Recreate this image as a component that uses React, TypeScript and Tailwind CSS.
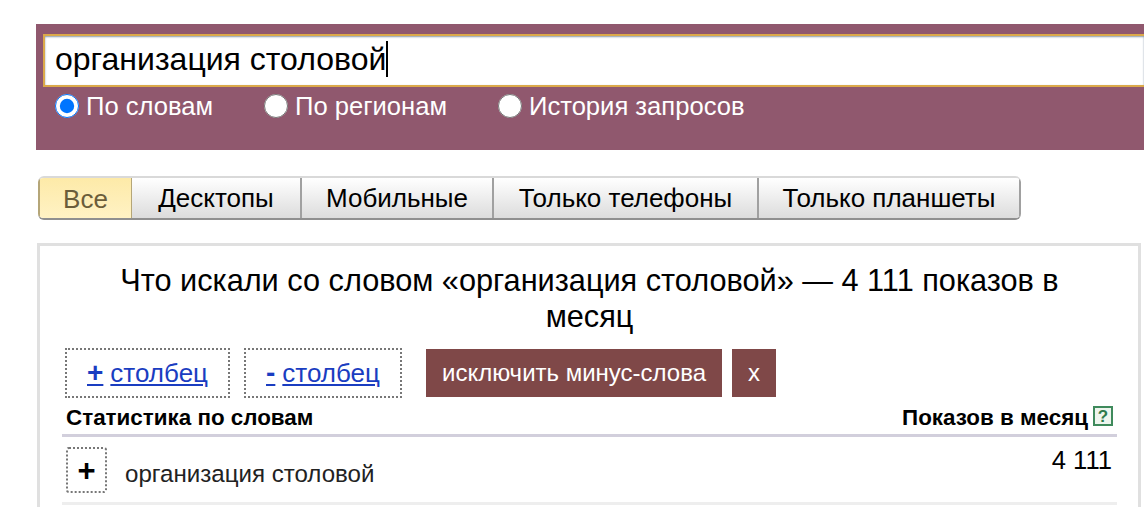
const tabs = ["Десктопы", "Мобильные", "Только телефоны", "Только планшеты"];
const tabWidths = ["w-[170px]", "w-[192px]", "w-[265px]", "w-[262px]"];
const modes = [
  { label: "По словам", checked: true, width: "w-[209px]" },
  { label: "По регионам", checked: false, width: "w-[234px]" },
  { label: "История запросов", checked: false, width: "w-auto" },
];

function ModeRadio({ label, checked, width }: { label: string; checked: boolean; width: string }) {
  return (
    <label className={`flex items-center gap-[7px] ${width}`}>
      <input type="radio" name="mode" defaultChecked={checked} className="m-0 h-6 w-6 shrink-0" />
      <span className="text-[25.6px] leading-[30px] text-white">{label}</span>
    </label>
  );
}

function ColumnButton({ sign, width }: { sign: string; width: string }) {
  return (
    <a href="#" className={`flex h-[50px] items-center justify-center border-2 border-dotted border-[#777] text-[26px] text-[#1a3dc1] underline ${width}`}>
      <b className="mr-[7px] text-[28px]">{sign}</b>столбец
    </a>
  );
}

export default function App() {
  return (
    <div className="h-[507px] w-[1144px] overflow-hidden bg-white pl-[36px] pt-[24px] font-['Liberation_Sans',Arial,sans-serif] text-black">
      <div className="h-[126px] bg-[#90586e] pl-[7px] pt-[10px]">
        <div className="flex h-[53px] items-center border-2 border-r-0 border-[#dba94a] bg-white pb-[3px] pl-[10px] shadow-[inset_0_1px_2px_#8899aa]">
          <span className="text-[32px] leading-[36px]">организация столовой</span>
          <span className="h-[36px] w-[2px] bg-black" />
        </div>
        <div className="mt-[4px] flex pl-[12px]">
          {modes.map(m => <ModeRadio key={m.label} {...m} />)}
        </div>
      </div>

      <div className="ml-[2px] mt-[26px] flex h-[44px] w-[983px] overflow-hidden rounded-[6px] border-b-2 border-t-2 border-b-[#8f8f8f] border-t-[#d9d9d9] text-[26px]">
        <div className="flex w-[94px] items-center justify-center border-l-2 border-r border-l-[#b5a678] border-r-[#b5a678] bg-gradient-to-b from-[#fdeaa8] to-[#fff2c4] pt-[2px] text-[#6b5d3a]">
          Все
        </div>
        {tabs.map((t, i) => (
          <div key={t} className={`flex items-center justify-center border-r-2 border-r-[#a0a0a0] bg-gradient-to-b from-white to-[#dcdcdc] ${tabWidths[i]}`}>
            {t}
          </div>
        ))}
      </div>

      <div className="mt-[23px] ml-[1px] h-[300px] w-[1104px] border-[3px] border-[#e0e0e0] pl-[22px] pr-[21px] pt-[17px]">
        <h1 className="mx-auto w-[960px] text-center text-[30.7px] font-normal leading-[36px]">
          Что искали со словом «организация столовой» — 4 111 показов в месяц
        </h1>
        <div className="ml-[3px] mt-[13px] flex items-center">
          <ColumnButton sign="+" width="w-[165px]" />
          <div className="w-[14px]" />
          <ColumnButton sign="-" width="w-[158px]" />
          <button className="ml-[24px] h-[48px] w-[296px] bg-[#7f4848] text-[24px] text-white">исключить минус-слова</button>
          <button className="ml-[10px] h-[48px] w-[44px] bg-[#7f4848] text-[24px] text-white">x</button>
        </div>
        <div className="flex h-[39px] items-center justify-between border-b-[3px] border-[#d2cfdc] pl-[4px] pt-[3px] text-[22.4px] font-bold">
          <span>Статистика по словам</span>
          <span className="flex items-center gap-[5px] pr-[4px]">
            Показов в месяц
            <svg width="20" height="20" viewBox="0 0 20 20" className="-mt-[3px]">
              <rect x="1" y="1" width="18" height="18" fill="#eef5ee" stroke="#3f8a5c" strokeWidth="2" />
              <text x="10" y="16" textAnchor="middle" fontSize="17" fontWeight="700" fill="#2f7a4c" fontFamily="Liberation Sans">?</text>
            </svg>
          </span>
        </div>
        <div className="flex h-[68px] items-start justify-between border-b-[3px] border-[#eeeeee] pl-[4px] pr-[5px]">
          <div className="flex items-start">
            <button className="mt-[10px] flex h-[46px] w-[41px] items-center justify-center rounded-[3px] border-2 border-dotted border-[#777] text-[31px] font-bold leading-none">+</button>
            <span className="ml-[18px] mt-[22px] text-[24.1px] leading-[30px] text-[#222]">организация столовой</span>
          </div>
          <span className="mt-[8px] text-[25.6px] leading-[30px]">4 111</span>
        </div>
      </div>
    </div>
  );
}
